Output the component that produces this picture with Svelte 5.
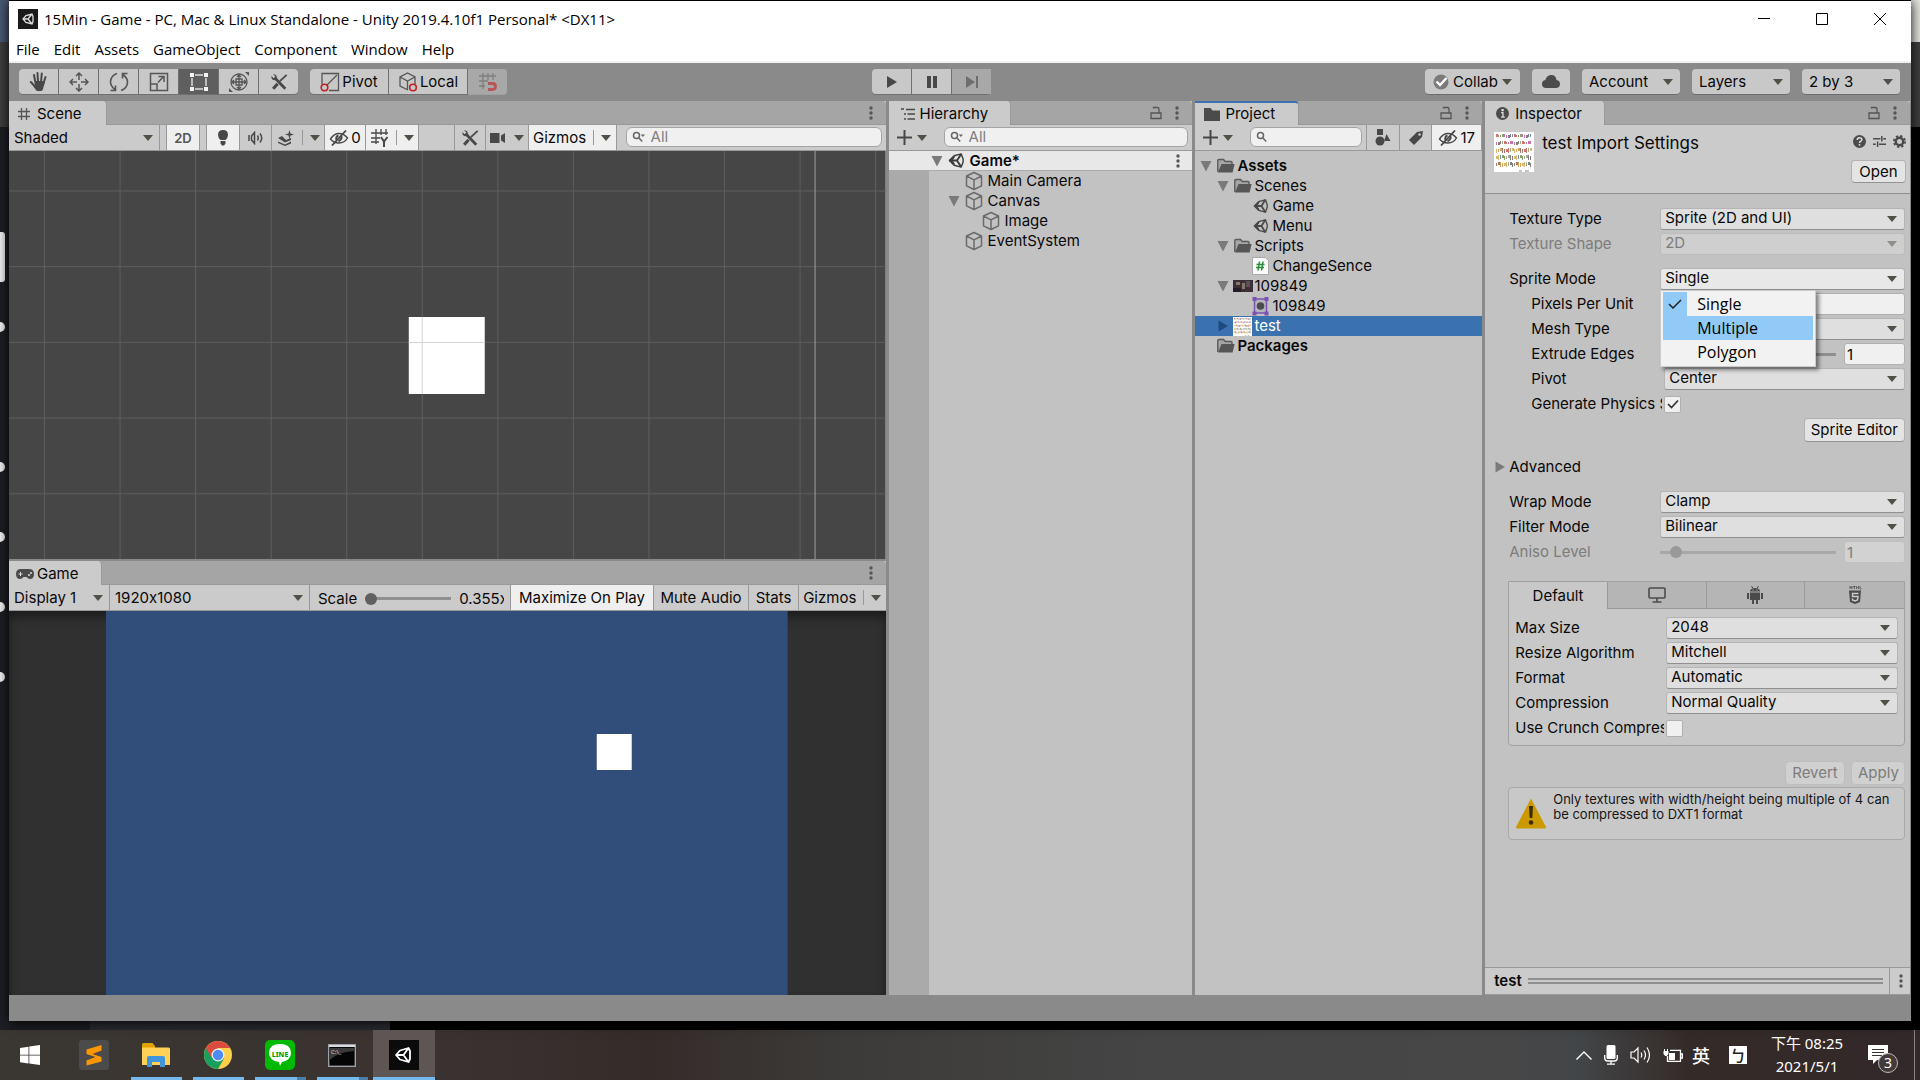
<script>
  const menus = ['File', 'Edit', 'Assets', 'GameObject', 'Component', 'Window', 'Help'];
  const hierarchy = [
    { name: 'Main Camera', depth: 1 },
    { name: 'Canvas', depth: 1, open: true },
    { name: 'Image', depth: 2 },
    { name: 'EventSystem', depth: 1 }
  ];
  const project = [
    { name: 'Assets', depth: 0, icon: 'folder', state: 'open', bold: true },
    { name: 'Scenes', depth: 1, icon: 'folder', state: 'open' },
    { name: 'Game', depth: 2, icon: 'unity' },
    { name: 'Menu', depth: 2, icon: 'unity' },
    { name: 'Scripts', depth: 1, icon: 'folder', state: 'open' },
    { name: 'ChangeSence', depth: 2, icon: 'script' },
    { name: '109849', depth: 1, icon: 'photo', state: 'open' },
    { name: '109849', depth: 2, icon: 'sprite' },
    { name: 'test', depth: 1, icon: 'sheet', state: 'closed', selected: true },
    { name: 'Packages', depth: 0, icon: 'folder', bold: true }
  ];
  const platformFields = [
    ['Max Size', '2048'],
    ['Resize Algorithm', 'Mitchell'],
    ['Format', 'Automatic'],
    ['Compression', 'Normal Quality']
  ];
  const spriteModes = ['Single', 'Multiple', 'Polygon'];
  const inks = ['#7a4a3a', '#c0443a', '#5a8a3a', '#caa23a', '#4a6aa0', '#b04a8a', '#555', '#d0801f', '#8a8a70'];
  const rowInks = [[1, 2, 5, 6, 4], [1, 5, 5, 6, 8], [3, 7, 0, 1, 8], [2, 8, 6, 3, 4], [6, 0, 7, 3, 8]];
  const blobs = [];
  for (let r = 0; r < 5; r++) {
    for (let c = 0; c < 18; c++) {
      const k = (r * 7 + c * 5) % 9;
      blobs.push({
        x: 2 + c * 2,
        y: 2 + r * 7 + (k % 2),
        w: 1 + (k % 3 === 0 ? 1 : 0),
        h: 3 + (k % 3) * (r > 1 ? 1 : 0) - (k % 4 === 1 ? 1 : 0),
        f: inks[rowInks[r][k % 5]]
      });
    }
  }
  const vLines = Array.from({ length: 12 }, (_, i) => 35.5 + i * 75.6);
  const hLines = Array.from({ length: 5 }, (_, i) => 40 + i * 75.7);
</script>

{#snippet arrow()}<svg class="arrow" viewBox="0 0 10 6" width="10" height="6"><path d="M0 0h10L5 6z" fill="currentColor" /></svg>{/snippet}
{#snippet kebab()}<button class="bare" aria-label="Panel options"><svg viewBox="0 0 4 14" width="4" height="14" fill="#555"><circle cx="2" cy="2" r="1.7" /><circle cx="2" cy="7" r="1.7" /><circle cx="2" cy="12" r="1.7" /></svg></button>{/snippet}
{#snippet lock()}<button class="bare" aria-label="Lock panel"><svg viewBox="0 0 12 14" width="12" height="14" fill="none" stroke="#555" stroke-width="1.3"><path d="M1 7h10v5.5H1zM3.500 2.500V1.500H7.500Q9 1.500 9 3V7" /></svg></button>{/snippet}
{#snippet foldout(open)}
  <svg class="fold" viewBox="0 0 12 12" width="12" height="12" fill="currentColor">
    {#if open}<path d="M0.500 1h11L6 11.500z" />{:else}<path d="M1.500 .5v11L11 6z" />{/if}
  </svg>
{/snippet}
{#snippet unity(size, color)}
  <svg viewBox="0 0 18 18" width={size} height={size} fill="none" stroke={color} stroke-linejoin="round">
    <path d="M1.500 9 6.500 4 14 2l2 5.500v3L14 16l-7.500-2z" stroke-width="1.500" />
    <path d="M1.500 9H9.500M14 2 9.500 9 14 16" stroke-width="2" />
    <path d="M1 9 7 3.500V6L4.500 9 7 12v2.500z" fill={color} stroke="none" />
  </svg>
{/snippet}
{#snippet cube()}
  <svg class="cube" viewBox="0 0 18 20" width="18" height="20" fill="none" stroke="#6b6b6b" stroke-width="1.500" stroke-linejoin="round">
    <path d="M9 1.500 16.500 5v9.800L9 18.500l-7.500-3.700V5zM1.500 5 9 8.800 16.500 5M9 8.800v9.700" />
  </svg>
{/snippet}
{#snippet folder()}
  <svg viewBox="0 0 18 16" width="18" height="16">
    <path d="M.8 14V2.500Q.8 1.500 2 1.500h4.500l1.800 2H14q1 0 1 1V6" fill="#a6a6a6" stroke="#5a5a5a" stroke-width="1.400" />
    <path d="M1 14.500 4.500 6H17.600l-2 8.500z" fill="#565656" />
  </svg>
{/snippet}
{#snippet magnifier(drop)}
  <svg viewBox="0 0 14 12" width="14" height="12" fill="none" stroke="#666" stroke-width="1.500">
    <circle cx="4.500" cy="4.500" r="3" /><path d="m6.800 6.800 3.400 3.600" />
    {#if drop}<path d="M8.800 3.500h4.200L10.900 6z" fill="#666" stroke="none" />{/if}
  </svg>
{/snippet}
{#snippet sheet(size)}
  <svg viewBox="0 0 40 40" width={size} height={size}>
    <rect width="40" height="40" fill="#fff" />
    {#each blobs as b}<rect x={b.x} y={b.y} width={b.w} height={b.h} fill={b.f} opacity="0.75" />{/each}
    <path d="M25 39h3M31 39h4" stroke="#888" />
  </svg>
{/snippet}
{#snippet tools()}
  <svg viewBox="0 0 20 20" width="18" height="18" fill="none" stroke="#484848">
    <path d="m5.500 5.500 11.500 12" stroke-width="3" /><path d="M3.500 1.300Q8.300 1.500 7.600 6.500L5.800 8Q1.200 8 1.500 3.200L4 5.700 6 4z" fill="#484848" stroke="none" />
    <path d="M18.500 2 11 9" stroke-width="2" /><path d="m8.500 12-5 5.500" stroke-width="3.500" />
  </svg>
{/snippet}
{#snippet eye()}
  <svg viewBox="0 0 20 16" width="20" height="16" fill="none" stroke="#484848" stroke-width="1.400">
    <path d="M1.500 9Q5 3.500 10 3.500T18.500 8Q15.500 13 10 13T1.500 9z" /><path d="M9.500 5.500q-3 1-2 5M12 5.500q2 3-2.500 6" stroke-width="2" /><path d="M3 15.500 17 .5" stroke-width="1.800" />
  </svg>
{/snippet}
{#snippet gridIcon()}
  <svg viewBox="0 0 14 14" width="14" height="14" fill="none" stroke="#555" stroke-width="1.300"><path d="M4.500 1v12M9.500 1v12M1 4.500h12M1 9.500h12" /></svg>
{/snippet}
{#snippet dropdown(id, value, disabled)}
  <span class="dd" class:off={disabled}>
    <select {id} {disabled}><option>{value}</option></select>
    {@render arrow()}
  </span>
{/snippet}

<div class="desktop">
  <div class="peek" aria-hidden="true">
    <i class="bar"></i><i></i><i class="far"></i><i></i><i></i><i></i>
  </div>
  <div class="app">
    <header class="title">
      <svg viewBox="0 0 20 20" width="20" height="20"><rect width="20" height="20" fill="#1b1b1b" /><path d="m5 10 3-3.500 6-1.500 1 2.500v5L14 15l-6-1.500zM5 10h5l4-5M10 10l4 5" fill="none" stroke="#ddd" stroke-width="1.300" /></svg>
      <h1>15Min - Game - PC, Mac &amp; Linux Standalone - Unity 2019.4.10f1 Personal* &lt;DX11&gt;</h1>
      <div class="winctl">
        <button aria-label="Minimize"><svg viewBox="0 0 12 12" width="12" height="12" stroke="#000"><path d="M0 5.500h12" /></svg></button>
        <button aria-label="Maximize"><svg viewBox="0 0 12 12" width="12" height="12" stroke="#000" fill="none"><path d="M.5.5h11v11H.5z" /></svg></button>
        <button aria-label="Close"><svg viewBox="0 0 12 12" width="12" height="12" stroke="#000"><path d="m0 0 12 12M12 0 0 12" /></svg></button>
      </div>
    </header>
    <nav class="menu">{#each menus as m}<button>{m}</button>{/each}</nav>

    <div class="main-tools">
      <div class="left">
        <div class="group seven">
          <button aria-label="Hand"><svg viewBox="0 0 20 22" width="20" height="22" fill="none" stroke="#484848" stroke-linecap="round"><path d="M6.500 12 5 4M9 11l-.5-9M12 11l.8-8.500M14.500 12.500 16.500 6M6.500 16 1.800 11" stroke-width="2" /><path d="M6 10h9q1 0 .5 2.500L14 18q-.5 2-2 2H9q-1.500 0-2.500-1.500L3 13l3 1z" fill="#484848" stroke="none" /></svg></button>
          <button aria-label="Move"><svg viewBox="0 0 20 20" width="20" height="20" fill="none" stroke="#555" stroke-width="1.500"><path d="M10 1.500V8M10 12v6.500M1.500 10H8M12 10h6.500M7 4l3-3 3 3M7 16l3 3 3-3M4 7l-3 3 3 3M16 7l3 3-3 3" /></svg></button>
          <button aria-label="Rotate"><svg viewBox="0 0 20 20" width="20" height="20" fill="none" stroke="#555" stroke-width="1.600"><path d="M8 1.500Q1.500 4 1.500 10q0 4 4.500 7.500M1.500 18.500h5v-5M12 18.500q6.500-2.500 6.500-8.500 0-4-4.500-7.500M18.500 1.500h-5v5" /></svg></button>
          <button aria-label="Scale"><svg viewBox="0 0 20 20" width="20" height="20" fill="none" stroke="#555" stroke-width="1.500"><path d="M1.500 1.500h17v17h-17zM1.500 12H8v6.500M9 10.500l5.500-6M9.500 4.500h5.500v5.500" /></svg></button>
          <button aria-label="Rect" class="active"><svg viewBox="0 0 20 20" width="20" height="20"><path d="M6 3h8M6 17h8M3 6v8M17 6v8" stroke="#ddd" stroke-width="1.500" /><path d="M1 1h4v4H1zM15 1h4v4h-4zM1 15h4v4H1zM15 15h4v4h-4z" fill="#f4f4f4" /></svg></button>
          <button aria-label="Transform"><svg viewBox="0 0 22 22" width="22" height="22" fill="none" stroke="#555" stroke-width="1.300"><circle cx="11" cy="11" r="8" /><path d="M11 4v14M4 11h14M9 6l2-2 2 2M9 16l2 2 2-2M6 9l-2 2 2 2M16 9l2 2-2 2M8 8h6v6H8z" /><path d="M17 1h4v4zM1 17v4h4z" fill="#555" stroke="none" /></svg></button>
          <button aria-label="Custom tools">{@render tools()}</button>
        </div>
        <div class="group two">
          <button><svg viewBox="0 0 20 20" width="20" height="20" fill="none" stroke="#555" stroke-width="1.300"><path d="M2 12V1.500h16.500v17H9M7 13 17 3" /><circle cx="4.500" cy="15.500" r="3.300" stroke="#c02020" stroke-width="1.600" /></svg>Pivot</button>
          <button><svg viewBox="0 0 20 20" width="20" height="20" fill="none" stroke="#555" stroke-width="1.300"><path d="M10 18 2 14V5l7.500-4L17 5v7M2 5l7.500 4L17 5M9.500 9v9" /><circle cx="15" cy="15.500" r="3.300" stroke="#c02020" stroke-width="1.600" /></svg>Local</button>
          <button disabled aria-label="Snap"><svg viewBox="0 0 20 20" width="20" height="20" fill="none" stroke="#666" stroke-width="1.300"><path d="M5 1v16M10 1v7M15 1v7M1 4h17M1 9h9M1 14h6" /><path d="M10 11.500h4.500q3 0 3 3t-3 3H10" stroke="#c02020" stroke-width="2.800" /></svg></button>
        </div>
      </div>
      <div class="play">
        <button aria-label="Play"><svg viewBox="0 0 10 12" width="10" height="12"><path d="M0 0v12l10-6z" fill="#484848" /></svg></button>
        <button aria-label="Pause"><svg viewBox="0 0 10 12" width="10" height="12"><path d="M0 0h4v12H0zM6 0h4v12H6z" fill="#484848" /></svg></button>
        <button aria-label="Step" disabled><svg viewBox="0 0 12 12" width="12" height="12"><path d="M0 0v12l9-6zM10 0h2v12h-2z" fill="#484848" /></svg></button>
      </div>
      <div class="right">
        <button class="pill w95"><svg viewBox="0 0 16 16" width="16" height="16"><circle cx="8" cy="8" r="7.500" fill="#7b7b7b" /><path d="m3.500 7.500 3.500 3.500 6.500-7" fill="none" stroke="#fff" stroke-width="2.400" /></svg>Collab {@render arrow()}</button>
        <button class="pill w38" aria-label="Services"><svg viewBox="0 0 18 13" width="18" height="13"><path d="M4 13q-4 0-4-4 0-3.500 3.300-4Q5 0 9.500 0q4.300 0 5 5Q18 5.500 18 9t-3.500 4z" fill="#4b4b4b" /></svg></button>
        <span class="pill w99"><select aria-label="Account"><option>Account</option></select>{@render arrow()}</span>
        <span class="pill w99"><select aria-label="Layers"><option>Layers</option></select>{@render arrow()}</span>
        <span class="pill w99"><select aria-label="Layout"><option>2 by 3</option></select>{@render arrow()}</span>
      </div>
    </div>

    <main class="panels">
      <div class="views">
        <section class="panel scene">
          <div class="tabs"><button class="tab scene-tab">{@render gridIcon()}Scene</button><span class="tab-end">{@render kebab()}</span></div>
          <div class="bar-row">
            <span class="mini shade"><select aria-label="Shading"><option>Shaded</option></select>{@render arrow()}</span>
            <span class="gap7"></span>
            <button class="lit w34"><b>2D</b></button>
            <span class="gap7"></span>
            <button class="lit w34" aria-label="Lighting"><svg viewBox="0 0 12 16" width="12" height="16" fill="#484848"><path d="M6 0q5 0 5 5 0 2.500-2.500 5h-5Q1 7.500 1 5q0-5 5-5zM3.500 11h5v2.500L7 15.500H5l-1.500-2z" /></svg></button>
            <button class="w31" aria-label="Audio"><svg viewBox="0 0 16 14" width="16" height="14" fill="none" stroke="#484848" stroke-width="1.500"><path d="M1 4v6M3.500 5l3-3.500v11L3.500 9zM9.500 4.500q1.500 2.500 0 5M12 2.500q3.500 4.500 0 9" /></svg></button>
            <button class="split w54" aria-label="Effects"><svg viewBox="0 0 18 16" width="18" height="16" fill="#484848"><path d="m1 8 4-2 4 4 5-2v2l-6 2.500zM1 11.500l7 3 6-3v2L8 16l-7-3zM12.500 0l1 3.500 3.500 1-3.500 1-1 3.500-1-3.500-3.500-1 3.500-1z" /></svg><i></i>{@render arrow()}</button>
            <button class="lit w42">{@render eye()}0</button>
            <button class="lit split w53" aria-label="Grid"><svg viewBox="0 0 18 18" width="18" height="18" fill="none" stroke="#484848" stroke-width="1.300"><path d="M5 0v15M10 0v6M15 0v6M0 4h17M0 9h9M0 13h8" /><path d="m10 8 3 4.500L16.500 8M13 12.500V18" stroke-width="2" /></svg><i></i>{@render arrow()}</button>
            <span class="fill"></span>
            <button class="edge w31" aria-label="Component tools">{@render tools()}</button>
            <button class="w45" aria-label="Camera"><svg viewBox="0 0 16 12" width="16" height="12" fill="#484848"><path d="M0 1h9.500v10H0zM11 3.500 15 1v10l-4-2.500z" /></svg>{@render arrow()}</button>
            <button class="lit split w88">Gizmos<i></i>{@render arrow()}</button>
            <label class="search wide">{@render magnifier(true)}<input placeholder="All" aria-label="Search scene" /></label>
          </div>
          <svg class="canvas" viewBox="0 0 877 408" preserveAspectRatio="none">
            <rect width="877" height="408" fill="#464646" />
            <g stroke="#5f5f5f">
              {#each vLines as x}<path d="M{x} 0V408" />{/each}
              {#each hLines as y}<path d="M0 {y}H877" />{/each}
            </g>
            <path d="M806.500 0V408" stroke="#a0a0a0" />
            <rect x="400" y="166" width="76" height="77" fill="#fff" />
            <path d="M413.500 166v77M400 191.500h76" stroke="#d4d4d4" />
          </svg>
        </section>
        <section class="panel game">
          <div class="tabs"><button class="tab game-tab"><svg viewBox="0 0 18 10" width="18" height="10"><path d="M5 0h8q5 0 5 5t-4 5q-2 0-3.500-2h-3Q6 10 4 10 0 10 0 5t5-5z" fill="#4b4b4b" /><path d="M2.500 5h4M4.500 3v4" stroke="#ddd" /><circle cx="13" cy="6" r="1" fill="#ddd" /><circle cx="15" cy="4" r="1" fill="#ddd" /></svg>Game</button><span class="tab-end">{@render kebab()}</span></div>
          <div class="bar-row">
            <span class="mini disp"><select aria-label="Display"><option>Display 1</option></select>{@render arrow()}</span>
            <span class="mini res"><select aria-label="Resolution"><option>1920x1080</option></select>{@render arrow()}</span>
            <label class="scale">Scale<input type="range" min="0" max="100" value="0" /><output>0.355x</output></label>
            <button class="lit w143">Maximize On Play</button>
            <button class="w95">Mute Audio</button>
            <button class="w50">Stats</button>
            <button class="split grow">Gizmos<i></i>{@render arrow()}</button>
          </div>
          <div class="stage">
            <svg viewBox="0 0 682 384" preserveAspectRatio="none"><rect width="682" height="384" fill="#314d79" /><rect x="491" y="123" width="35" height="36" fill="#fff" /></svg>
          </div>
        </section>
      </div>

      <section class="panel hierarchy">
        <div class="tabs"><button class="tab hier-tab"><svg viewBox="0 0 14 12" width="14" height="12" stroke="#484848" stroke-width="1.400"><path d="M0 1h3M5 1.500h9M3 6h2M6.500 6H14M3 11h2M6.500 11H14" /></svg>Hierarchy</button><span class="tab-end">{@render lock()}{@render kebab()}</span></div>
        <div class="bar-row find">
          <button class="add" aria-label="Create"><svg viewBox="0 0 15 15" width="15" height="15" stroke="#484848" stroke-width="2"><path d="M7.500 0v15M0 7.500h15" /></svg>{@render arrow()}</button>
          <label class="search">{@render magnifier(true)}<input placeholder="All" aria-label="Search hierarchy" /></label>
        </div>
        <div class="scene-row">{@render foldout(true)}{@render unity(17, '#3c3c3c')}<strong>Game*</strong>{@render kebab()}</div>
        <div class="hier-body">
          <ul>
            {#each hierarchy as h}
              <li class="d{h.depth}"><span class="slot">{#if h.open}{@render foldout(true)}{/if}</span>{@render cube()}{h.name}</li>
            {/each}
          </ul>
        </div>
      </section>

      <section class="panel project">
        <div class="tabs"><button class="tab proj-tab"><svg viewBox="0 0 16 14" width="16" height="14"><path d="M0 14V1h6.500l2 2.500H16V14z" fill="#4b4b4b" /></svg>Project</button><span class="tab-end">{@render lock()}{@render kebab()}</span></div>
        <div class="bar-row find">
          <button class="add" aria-label="Create"><svg viewBox="0 0 15 15" width="15" height="15" stroke="#484848" stroke-width="2"><path d="M7.500 0v15M0 7.500h15" /></svg>{@render arrow()}</button>
          <label class="search">{@render magnifier(false)}<input aria-label="Search project" /></label>
          <button class="edge w33" aria-label="Filter by type"><svg viewBox="0 0 16 17" width="16" height="17" fill="#484848"><path d="M2 0h6v6H2zM11.500 5l4 7H9z" /><circle cx="5" cy="12" r="4.500" /></svg></button>
          <button class="w31" aria-label="Filter by label"><svg viewBox="0 0 14 14" width="14" height="14"><path d="M8 1 14 0l-1 6-8 8-5-5z" fill="#484848" /><circle cx="10.500" cy="3.500" r="1.300" fill="#cbcbcb" /></svg></button>
          <button class="lit w50">{@render eye()}17</button>
        </div>
        <ul class="tree">
          {#each project as p}
            <li class="p{p.depth}" class:selected={p.selected} class:bold={p.bold}>
              <span class="slot">{#if p.state}{@render foldout(p.state === 'open')}{/if}</span>
              <span class="ico">
                {#if p.icon === 'folder'}{@render folder()}
                {:else if p.icon === 'unity'}{@render unity(16, '#484848')}
                {:else if p.icon === 'script'}<svg viewBox="0 0 17 18" width="17" height="18"><path d="M.5.5h13l3 3v14H.5z" fill="#fafafa" stroke="#aaa" /><path d="M7.500 4.500 6 13.500M11 4.500 9.500 13.500M4.500 7.500h8M4 10.500h8" stroke="#2e8b3e" stroke-width="1.500" /></svg>
                {:else if p.icon === 'photo'}<svg viewBox="0 0 20 12" width="20" height="12"><rect width="20" height="12" fill="#3b2f35" /><path d="M3 2h4v3H3zM9 3h3v6H9z" fill="#84786c" /><path d="M13 1h4v6h-4z" fill="#5c5058" /><path d="M0 8h8v4H0z" fill="#241c28" /></svg>
                {:else if p.icon === 'sprite'}<svg viewBox="0 0 17 20" width="17" height="20"><path d="M2.500 3v14h12V3z" fill="#b5b5bd" stroke="#7a52b3" stroke-width="1.500" /><path d="M.5 1h4v4h-4zM12.500 1h4v4h-4zM.5 15.500h4v4h-4zM12.500 15.500h4v4h-4z" fill="#7a52b3" /><circle cx="8.500" cy="10" r="3.800" fill="#4b4b4b" /></svg>
                {:else}{@render sheet(19)}{/if}
              </span>{p.name}
            </li>
          {/each}
        </ul>
      </section>

      <section class="panel inspector">
        <div class="tabs"><button class="tab insp-tab"><svg viewBox="0 0 14 14" width="13" height="13"><circle cx="7" cy="7" r="7" fill="#4b4b4b" /><path d="M5.500 6H7.500v4.500M5.500 11h4M6.500 2.800h1.200v1.200H6.500z" stroke="#ddd" fill="none" stroke-width="1.400" /></svg>Inspector</button><span class="tab-end">{@render lock()}{@render kebab()}</span></div>
        <div class="head">
          {@render sheet(40)}
          <h2>test Import Settings</h2>
          <div class="head-side">
            <div class="head-icons">
              <svg viewBox="0 0 14 14" width="13" height="13"><circle cx="7" cy="7" r="7" fill="#4b4b4b" /><path d="M4.500 5.500q0-2.500 2.500-2.500t2.500 2q0 1-1.500 2-1 .5-1 1.500M7 9.700v1.800" fill="none" stroke="#ddd" stroke-width="1.600" /></svg>
              <svg viewBox="0 0 14 14" width="13" height="13" fill="none" stroke="#4b4b4b" stroke-width="1.600"><path d="M0 4h8M11 4h3M9.500 1v6M0 10h3M6.500 10H14M5 7v6" /></svg>
              <svg viewBox="0 0 14 14" width="13" height="13" fill="none" stroke="#4b4b4b"><circle cx="7" cy="7" r="4" stroke-width="2.600" /><circle cx="7" cy="7" r="6" stroke-width="2" stroke-dasharray="2.500 2.210" /></svg>
            </div>
            <button class="btn open-btn">Open</button>
          </div>
        </div>
        <div class="body">
          <div class="fields">
            <div class="row"><label for="tt">Texture Type</label>{@render dropdown('tt', 'Sprite (2D and UI)', false)}</div>
            <div class="row dim"><label for="ts">Texture Shape</label>{@render dropdown('ts', '2D', true)}</div>
            <div class="row space">
              <label for="sm">Sprite Mode</label>
              <span class="dd hot">
                <select id="sm">{#each spriteModes as m}<option>{m}</option>{/each}</select>{@render arrow()}
                <div class="popup" role="listbox" aria-label="Sprite Mode">
                  {#each spriteModes as m, i}
                    <button role="option" aria-selected={i === 0} class:hover={i === 1}>
                      <span class="tick">{#if i === 0}<svg viewBox="0 0 14 10" width="14" height="10"><path d="m1 5 4 4 8-8" fill="none" stroke="#222" stroke-width="1.500" /></svg>{/if}</span>{m}
                    </button>
                  {/each}
                </div>
              </span>
            </div>
            <div class="row sub"><label for="ppu">Pixels Per Unit</label><input id="ppu" class="box" /></div>
            <div class="row sub"><label for="mt">Mesh Type</label>{@render dropdown('mt', 'Tight', false)}</div>
            <div class="row sub"><label for="ee">Extrude Edges</label><span class="slide"><input id="ee" type="range" min="0" max="32" value="1" /><input class="box num" value="1" aria-label="Extrude Edges value" /></span></div>
            <div class="row sub"><label for="pv">Pivot</label>{@render dropdown('pv', 'Center', false)}</div>
            <div class="row sub"><label for="gp">Generate Physics Shape</label><span class="check"><input id="gp" type="checkbox" checked /><svg viewBox="0 0 12 10" width="12" height="10"><path d="m1 5 3.500 3.500L11 1.500" fill="none" stroke="#333" stroke-width="1.700" /></svg></span></div>
          </div>
          <div class="actions sprite-ed"><button class="btn">Sprite Editor</button></div>
          <button class="advanced">{@render foldout(false)}Advanced</button>
          <div class="fields">
            <div class="row"><label for="wm">Wrap Mode</label>{@render dropdown('wm', 'Clamp', false)}</div>
            <div class="row"><label for="fm">Filter Mode</label>{@render dropdown('fm', 'Bilinear', false)}</div>
            <div class="row dim"><label for="al">Aniso Level</label><span class="slide"><input id="al" type="range" min="0" max="16" value="1" disabled /><input class="box num" value="1" aria-label="Aniso Level value" disabled /></span></div>
          </div>
          <div class="platform">
            <div class="ptabs">
              <button class="on">Default</button>
              <button aria-label="Standalone"><svg viewBox="0 0 18 16" width="18" height="16" fill="none" stroke="#4b4b4b" stroke-width="1.600"><rect x="1" y="1" width="16" height="10" rx="1" /><path d="M9 11v3.500M4.500 15h9" /></svg></button>
              <button aria-label="Android"><svg viewBox="0 0 16 18" width="16" height="18" fill="#4b4b4b"><path d="M3 5.500q0-3.500 5-3.500t5 3.500zM3 6.500h10V14H3zM0 7h2v6H0zM14 7h2v6h-2zM5 14h2v4H5zM9 14h2v4H9z" /><path d="m4.500 0 1.500 2.500M11.500 0 10 2.500" stroke="#4b4b4b" /><path d="M5.500 3.500h1v1h-1zM9.500 3.500h1v1h-1z" fill="#bbb" /></svg></button>
              <button aria-label="WebGL"><svg viewBox="0 0 14 18" width="14" height="18"><path d="M1 4.500h12l-1 11.500-5 2-5-2z" fill="#4b4b4b" /><path d="M10.500 7.500h-6v3h5.500l-.5 3.500-2.500 1-2.500-1v-1.500" fill="none" stroke="#ccc" stroke-width="1.400" /><path d="M2 0v3M4 0v3M2 1.500h2M5 .5h2.500M6.300 0v3M8.500 3V.5l1 1 1-1V3M12 0v3h1.500" stroke="#4b4b4b" stroke-width=".8" fill="none" /></svg></button>
            </div>
            <div class="fields">
              {#each platformFields as [label, value], i}
                <div class="row"><label for="pf{i}">{label}</label>{@render dropdown('pf' + i, value, false)}</div>
              {/each}
              <div class="row"><label for="cc">Use Crunch Compression</label><span class="check"><input id="cc" type="checkbox" /></span></div>
            </div>
          </div>
          <div class="actions apply"><button class="btn" disabled>Revert</button><button class="btn" disabled>Apply</button></div>
          <div class="help">
            <svg viewBox="0 0 32 32" width="32" height="32"><path d="M16 1.500 31 30q.5 1.500-1.500 1.500h-27Q.5 31.500 1 30z" fill="#cc9a00" /><path d="M14 9h4l-.7 12h-2.600z" fill="#3a2c00" /><circle cx="16" cy="25.500" r="2.300" fill="#3a2c00" /></svg>
            <p>Only textures with width/height being multiple of 4 can be compressed to DXT1 format</p>
          </div>
        </div>
        <footer class="preview"><strong>test</strong><span class="grip"></span>{@render kebab()}</footer>
      </section>
    </main>
  </div>

  <footer class="taskbar">
    <button aria-label="Start"><svg viewBox="0 0 20 20" width="20" height="20" fill="#fff"><path d="M0 3l8.500-1.300v8H0zM9.300 1.600 20 0v9.700H9.300zM0 10.500h8.500v8L0 17.300zM9.300 10.500H20V20L9.300 18.500z" /></svg></button>
    <button aria-label="Sublime Text"><svg viewBox="0 0 30 30" width="30" height="30"><rect width="30" height="30" rx="3" fill="#4b4b4b" /><path d="M22.500 5v5.500L13.500 14l9 3v4.500L7.500 25.500v-5l9-3.500-9-3V9.500z" fill="#ff9800" /></svg></button>
    <button class="run" aria-label="File Explorer"><svg viewBox="0 0 28 24" width="28" height="24"><path d="M0 1.500Q0 0 1.500 0h9L13 3v3H0z" fill="#e2a300" /><path d="M0 4.500h26.500q1.500 0 1.500 1.500v16H0z" fill="#ffd257" /><path d="M5 24V15q0-2 2-2h14q2 0 2 2v9h-5v-5h-8v5z" fill="#3f96dd" /></svg></button>
    <button class="run" aria-label="Chrome"><svg viewBox="0 0 28 28" width="28" height="28"><circle cx="14" cy="14" r="14" fill="#fdd04a" /><path d="M1.900 7A14 14 0 0 0 14 28l6-10.500L14 14z" fill="#17a05d" /><path d="M1.900 7A14 14 0 0 1 26.100 7H14L8 17.500z" fill="#db4b3f" /><circle cx="14" cy="14" r="6.500" fill="#f1f1f1" /><circle cx="14" cy="14" r="5.200" fill="#4c8bf5" /></svg></button>
    <button class="run multi" aria-label="LINE"><svg viewBox="0 0 30 30" width="30" height="30"><rect width="30" height="30" rx="5" fill="#00b900" /><path d="M15 4q11 0 11 9 0 7-9 9l-2 4-1-4Q4 20.500 4 13q0-9 11-9z" fill="#fff" /><text x="15" y="16.500" text-anchor="middle" font-size="7" font-weight="800" fill="#00a000">LINE</text></svg></button>
    <button class="run multi" aria-label="Command Prompt"><svg viewBox="0 0 28 23" width="28" height="23"><rect x=".7" y=".7" width="26.600" height="21.600" fill="#050505" stroke="#9aa0a6" stroke-width="1.400" /><path d="M1 1h26v2H1z" fill="#d9dcdf" /><path d="M1.500 4H26v3Q10 8 1.500 16z" fill="#3a3a3a" /><text x="3" y="9.500" font-size="6" fill="#ddd">C:\_</text></svg></button>
    <button class="run current" aria-label="Unity"><svg viewBox="0 0 30 30" width="30" height="30"><rect width="30" height="30" fill="#0b0b0b" /><path d="m7 15 4-4.500L19.500 8l1.500 3v8l-1.500 3L11 19.500zM7 15h7.500l5-7M14.500 15l5 7" fill="none" stroke="#fff" stroke-width="1.800" stroke-linejoin="round" /></svg></button>
    <div class="tray">
      <svg viewBox="0 0 16 9" width="16" height="9"><path d="m.5 8.500 7.500-7.500 7.500 7.500" fill="none" stroke="#fff" stroke-width="1.400" /></svg>
      <svg viewBox="0 0 14 20" width="14" height="20"><rect x="2.500" y="0" width="9" height="14" rx="1.500" fill="#fff" /><path d="M.7 10v3q0 3 3 3h6.600q3 0 3-3v-3M7 16v3M3 19.200h8" fill="none" stroke="#fff" stroke-width="1.300" /></svg>
      <svg viewBox="0 0 21 18" width="21" height="18" fill="none" stroke="#fff" stroke-width="1.200"><path d="M1 6h3l4-4v14l-4-4H1zM11 6.500q1.500 2.500 0 5M14 4.500q3 4.500 0 9M17 1.500q5 7.500 0 15" /></svg>
      <svg viewBox="0 0 20 13" width="20" height="13"><path d="M4.500 7v5.400h13V1.400H7M17.500 5h1.800v4h-1.800" fill="none" stroke="#fff" stroke-width="1.300" /><path d="M6 4h6v7H6zM.5 2h5v3L3.800 7H2.200L.5 5zM1 0h1v2H1zM4 0h1v2H4z" fill="#fff" /></svg>
      <span class="ime">英</span>
      <span class="zhu">ㄅ</span>
      <time><span>下午 08:25</span><span>2021/5/1</span></time>
      <span class="note"><svg viewBox="0 0 20 19" width="20" height="19"><path d="M0 0h20v15H9l-4 4v-4H0z" fill="#fff" /><path d="M4 4.500h12M4 7.500h12M4 10.500h12" stroke="#3a3030" stroke-width="1.200" /></svg><em>3</em></span>
    </div>
  </footer>
</div>

<style>
  :global(body) { background: #000; }
  :global(*) { box-sizing: border-box; }
  .desktop {
    min-height: 100vh; display: flex; flex-direction: column; position: relative;
    font: 15px/20px Inter, "Liberation Sans", sans-serif; font-feature-settings: "calt" 0; color: #090909;
    background:
      linear-gradient(#4a5a75 0 42px, #404040 42px 127px, #1d1f24 127px) left / 9px 100% no-repeat,
      linear-gradient(90deg, #1b1c20 90px, #27292e 90px 390px, #000 390px) bottom / 100% 60px no-repeat,
      linear-gradient(#e6e6e2 0 42px, #404040 42px 127px, #000 127px) right / 9px 100% no-repeat, #000;
  }
  button, select, input { font: inherit; font-feature-settings: inherit; color: inherit; border: 0; padding: 0; margin: 0; background: none; border-radius: 0; }
  svg { display: block; flex: none; }
  select { appearance: none; outline: 0; }
  option { color: #000; }
  ul { list-style: none; margin: 0; padding: 0; }
  h1, h2, p { margin: 0; font-size: inherit; font-weight: 400; }
  .arrow { color: #505048; }

  .peek { position: absolute; left: 0; top: 232px; width: 5px; display: flex; flex-direction: column; gap: 60px; }
  .peek i { width: 5px; height: 10px; background: #f4f4f4; border-radius: 0 5px 5px 0; }
  .peek .bar { height: 50px; border-radius: 0 3px 3px 0; margin-bottom: -20px; }
  .peek .far { margin-top: 70px; }

  .app { flex: 1; margin: 1px 9px 9px; display: flex; flex-direction: column; background: #8a8a8a; position: relative; box-shadow: 0 0 12px #000; min-height: 0; }
  .title { background: #fff; height: 35px; display: flex; align-items: center; padding: 0 2px 0 9px; gap: 6px; font: 15px/20px "Open Sans", "Noto Sans", sans-serif; color: #000; }
  .title h1 { flex: 1; }
  .winctl { display: flex; }
  .winctl button { width: 58px; height: 35px; display: grid; place-items: center; }
  .menu { background: #fff; height: 27px; display: flex; align-items: start; gap: 14px; padding: 3px 7px 0; border-bottom: 2px solid #f0f0f0; font: 15px/20px "Open Sans", "Noto Sans", sans-serif; color: #000; }

  .main-tools { display: grid; grid-template-columns: minmax(0, 863fr) 119px minmax(0, 920fr); align-items: center; height: 38px; }
  .left { display: flex; gap: 12px; padding-left: 10px; }
  .group, .play { display: flex; gap: 1px; background: #707070; border-radius: 4px; height: 26px; }
  .group button, .play button { background: #c8c8c8; height: 25px; display: flex; align-items: center; justify-content: center; gap: 2px; width: 39px; }
  .group.two button { width: 78px; }
  .group.two button:last-child { width: 39px; }
  .group button:first-child, .play button:first-child { border-radius: 4px 0 0 4px; }
  .group button:last-child { border-radius: 0 4px 4px 0; }
  .group .active { background: #5f5f5f; }
  .group button:disabled, .play button:disabled { background: #a8a8a8; }
  button:disabled svg { opacity: 0.6; }
  .group.two { background: linear-gradient(90deg, #707070 158px, #a0a0a0 158px); }
  .play button { width: 39px; }
  .right { display: flex; justify-content: flex-end; gap: 12px; padding-right: 11px; }
  .pill { height: 26px; background: #c8c8c8; border-radius: 4px; border-bottom: 1px solid #6c6c6c; display: flex; align-items: center; justify-content: center; gap: 4px; }
  span.pill { display: grid; align-items: center; justify-content: stretch; }
  span.pill > :global(*) { grid-area: 1 / 1; }
  span.pill select { padding-left: 7px; width: 100%; }
  span.pill .arrow { justify-self: end; margin-right: 7px; pointer-events: none; }
  .w31 { width: 32px; } .w33 { width: 34px; } .w34 { width: 33px; } .w38 { width: 38px; }
  .w42 { width: 41px; } .w45 { width: 43px; } .w50 { width: 50px; } .w53 { width: 53px; } .w54 { width: 53px; }
  .w88 { width: 88px; } .w95 { width: 95px; } .w99 { width: 98px; } .w143 { width: 143px; }

  .panels { flex: 1; display: grid; grid-template-columns: minmax(0, 877fr) minmax(0, 304fr) minmax(0, 287fr) minmax(0, 425fr); gap: 3px; margin: 0 1px 26px 0; }
  .views { display: grid; grid-template-rows: minmax(0, 458fr) minmax(0, 434fr); gap: 2px; }
  .panel { display: flex; flex-direction: column; background: #c2c2c2; min-width: 0; }
  .tabs { height: 24px; background: #a5a5a5; border-bottom: 1px solid #999; display: flex; flex: none; justify-content: space-between; border-radius: 0 4px 0 0; }
  .tab { height: 24px; background: #cbcbcb; border-right: 1px solid #999; border-radius: 0 4px 0 0; display: flex; align-items: center; gap: 6px; padding: 1px 0 0 8px; }
  .scene-tab { width: 98px; } .game-tab { width: 93px; gap: 3px; padding-left: 7px; } .hier-tab { width: 122px; gap: 5px; padding-left: 12px; }
  .proj-tab { width: 104px; gap: 5px; padding: 0 0 0 9px; border-top: 2px solid #3a72b0; } .insp-tab { width: 120px; padding-left: 11px; }
  .tab-end { display: flex; align-items: center; gap: 13px; padding-right: 13px; }
  .bare { display: grid; place-items: center; }
  .bar-row { height: 26px; flex: none; background: #cbcbcb; border-bottom: 1px solid #999; display: flex; align-items: stretch; white-space: nowrap; }
  .bar-row > button { border-right: 1px solid #999; display: flex; align-items: center; justify-content: center; gap: 2px; flex: none; }
  .bar-row .lit { background: #efefef; }
  .bar-row .edge { border-left: 1px solid #999; }
  .bar-row b { font-weight: 600; font-size: 13px; color: #555; }
  .bar-row .split { gap: 7px; }
  .split i { width: 1px; height: 15px; background: #999; }
  .bar-row .w45 { gap: 8px; }
  .bar-row .grow { flex: 1; border-right: 0; }
  .mini { display: grid; align-items: center; border-right: 1px solid #999; flex: none; }
  .mini > :global(*) { grid-area: 1 / 1; }
  .mini select { padding-left: 5px; width: 100%; }
  .mini .arrow { justify-self: end; margin-right: 6px; pointer-events: none; }
  .shade { width: 151px; } .disp { width: 101px; } .res { width: 200px; }
  .gap7 { width: 7px; border-right: 1px solid #999; flex: none; }
  .fill { flex: 1; }
  .search { flex: 1; display: flex; align-items: center; gap: 5px; background: #f0f0f0; border: 1px solid #a4a4a4; border-radius: 6px; height: 20px; margin: 2px 4px 0 9px; padding-left: 5px; min-width: 0; }
  .search.wide { flex: none; width: 256px; }
  .search input { min-width: 0; width: 100%; outline: 0; height: 18px; }
  .search input::placeholder { color: #808080; opacity: 1; }
  .bar-row > .add { width: 46px; border: 0; gap: 5px; }
  .scale { display: flex; align-items: center; gap: 8px; padding: 2px 5px 0 8px; border-right: 1px solid #999; flex: none; width: 201px; overflow: hidden; }
  .scale output { width: 45px; overflow: hidden; }
  .scale input { width: 86px; flex: none; }

  input[type='range'] { appearance: none; height: 14px; background: linear-gradient(#8f8f8f, #8f8f8f) center / 100% 3px no-repeat; outline: 0; }
  input[type='range']::-webkit-slider-thumb { appearance: none; width: 12px; height: 12px; border-radius: 50%; background: #606060; }
  input[type='range']:disabled { background-image: linear-gradient(#a8a8a8, #a8a8a8); }
  input[type='range']:disabled::-webkit-slider-thumb { background: #999; }

  .canvas { width: 100%; flex: 1; min-height: 0; height: 0; }
  .stage { flex: 1; min-height: 0; background: #303030; box-shadow: inset 0 6px 10px #1c1c1c; display: grid; grid-template-columns: 97fr 682fr 98fr; }
  .stage svg { grid-column: 2; width: 100%; height: 100%; }

  .scene-row { height: 20px; background: #e8e8e8; border-bottom: 1px solid #aaa; display: flex; align-items: center; padding: 0 12px 0 42px; gap: 5px; }
  .scene-row strong { flex: 1; }
  strong { font-weight: 600; }
  .fold { color: #7a7a7a; }
  .hier-body { flex: 1; background: #c2c2c2; border-left: 40px solid #aaa; }
  li { display: flex; align-items: center; height: 20px; white-space: nowrap; gap: 3px; }
  .slot { width: 14px; flex: none; }
  .cube { margin-right: 2px; }
  .d1 { padding-left: 19px; } .d2 { padding-left: 36px; }
  .tree { padding-top: 5px; }
  .tree li { gap: 1px; }
  .p0 { padding-left: 5px; } .p1 { padding-left: 22px; } .p2 { padding-left: 40px; }
  .ico { width: 21px; display: grid; place-items: center; flex: none; }
  .tree .bold { font-weight: 600; }
  .selected { background: #3a72b0; color: #fff; }
  .selected .fold { color: #1f4a80; }

  .head { height: 69px; flex: none; background: #cbcbcb; border-bottom: 1px solid #8f8f8f; display: flex; padding: 7px 4px 0 9px; }
  .head h2 { flex: 1; margin: 1px 0 0 8px; font-size: 17px; }
  .head-side { display: flex; flex-direction: column; align-items: flex-end; gap: 12px; padding-top: 3px; }
  .head-icons { display: flex; gap: 7px; }
  .btn { background: #e4e4e4; border: 1px solid #b2b2b2; border-bottom-color: #939393; border-radius: 4px; height: 24px; padding: 0 6px; }
  .open-btn { width: 55px; height: 23px; }
  .btn:disabled { background: #d0d0d0; border-color: #bdbdbd; color: #7c7c7c; }
  .body { flex: 1; padding: 14px 5px 0 23px; min-width: 0; }
  .fields { display: grid; gap: 3px; }
  .row { display: grid; grid-template-columns: 151px minmax(0, 1fr); align-items: center; height: 22px; padding-left: 1px; min-width: 0; }
  .row label { white-space: nowrap; overflow: hidden; margin-right: 2px; }
  .dim { color: #7c7c7c; }
  .space { margin-top: 10px; }
  .sub { padding-left: 23px; grid-template-columns: 133px minmax(0, 1fr); }
  .dd { display: grid; align-items: center; position: relative; background: #dfdfdf; border: 1px solid #b5b5b5; border-bottom-color: #8f8f8f; border-radius: 3px; height: 22px; }
  .dd > select, .dd > .arrow { grid-area: 1 / 1; }
  .dd select { width: 100%; padding-left: 4px; height: 20px; line-height: 18px; padding-bottom: 2px; opacity: 1; }
  .dd > .arrow { justify-self: end; margin-right: 7px; pointer-events: none; }
  .dd.off { background: #cfcfcf; border-color: #bcbcbc; }
  .dd.off .arrow { opacity: 0.5; }
  .dd.hot { background: #e8e8e8; }
  .box { background: #f0f0f0; border: 1px solid #b0b0b0; border-radius: 3px; height: 22px; width: 100%; padding-left: 2px; }
  .box:disabled { background: #d2d2d2; border-color: #c0c0c0; }
  .slide { display: grid; grid-template-columns: minmax(0, 1fr) 61px; gap: 8px; align-items: center; }
  .sub .slide { margin-left: -4px; }
  .check { display: grid; width: 17px; height: 17px; place-items: center; }
  .check > :global(*) { grid-area: 1 / 1; }
  .check input { appearance: none; width: 17px; height: 17px; background: #f0f0f0; border: 1px solid #b0b0b0; border-radius: 2px; }
  .check svg { pointer-events: none; }
  .popup { position: absolute; left: -1px; top: 21px; width: 156px; background: #f2f2f2; border: 1px solid #ccc; padding: 1px 2px 2px; box-shadow: 3px 3px 4px #0007; z-index: 5; font: 16px/22px "Open Sans", "Noto Sans", sans-serif; color: #000; }
  .popup button { display: flex; width: 100%; height: 24px; align-items: center; gap: 10px; }
  .popup .hover, .tick:has(svg) { background: #91c9f7; }
  .tick { width: 24px; height: 24px; display: grid; place-items: center; }
  .actions { display: flex; justify-content: flex-end; gap: 6px; }
  .sprite-ed { margin-top: 3px; }
  .advanced { display: flex; align-items: center; gap: 3px; margin: 15px 0 14px -16px; }
  .advanced .fold { margin-left: 2px; }
  .platform { margin-top: 18px; background: #c8c8c8; border: 1px solid #a0a0a0; border-radius: 0 0 4px 4px; padding-bottom: 6px; }
  .ptabs { display: grid; grid-template-columns: repeat(4, minmax(0, 1fr)); height: 27px; margin-bottom: 8px; }
  .ptabs button { background: #b5b5b5; border-right: 1px solid #999; border-bottom: 1px solid #999; display: grid; place-items: center; }
  .ptabs .on { background: #c8c8c8; border-bottom: 0; }
  .ptabs button:last-child { border-right: 0; }
  .platform .row { padding: 0 6px; grid-template-columns: 151px minmax(0, 1fr); }
  .apply { margin-top: 15px; }
  .apply .btn:first-child { width: 60px; }
  .apply .btn { width: 54px; }
  .help { margin: 2px 0 0; height: 53px; background: #c8c8c8; border: 1px solid #a8a8a8; border-radius: 4px; display: flex; gap: 6px; padding: 0 4px 2px 6px; align-items: center; }
  .help p { font-size: 13px; line-height: 15px; align-self: start; padding-top: 4px; color: #161616; }
  .preview { height: 28px; background: #cbcbcb; border-top: 1px solid #999; border-bottom: 1px solid #999; display: flex; align-items: center; padding: 0 7px 0 9px; gap: 6px; }
  .grip { flex: 1; height: 6px; border-top: 2px solid #8f8f8f; border-bottom: 2px solid #8f8f8f; }
  .preview .bare { border-left: 1px solid #999; height: 26px; padding-left: 9px; }

  .taskbar { height: 50px; display: flex; background: linear-gradient(90deg, #3a3732, #3a3230 24%, #352c2a 34%, #3c3b39 44%, #454545 60%, #474747 78%, #434648 82%, #342b28 88%, #33282a 100%); font-family: "Noto Sans", "Noto Sans CJK TC", sans-serif; color: #fff; }
  .taskbar > button { width: 62px; display: grid; place-items: center; position: relative; }
  .taskbar > button:first-child { width: 63px; padding-right: 3px; }
  .run { background: linear-gradient(#76b9ed, #76b9ed) center bottom / 51px 3px no-repeat; }
  .multi { background: linear-gradient(90deg, #76b9ed 42px, #4b7da5 42px) center bottom / 51px 3px no-repeat; }
  .current { background: linear-gradient(#76b9ed, #76b9ed) center bottom / 100% 3px no-repeat, #5e5654; }
  .tray { margin-left: auto; display: flex; align-items: center; gap: 19px; padding-right: 16px; border-right: 1px solid #8a8280; margin-right: 5px; }
  .tray > svg { margin-right: -7px; }
  .ime { font: 500 18px/24px "Noto Sans CJK TC", sans-serif; margin-left: -3px; }
  .zhu { width: 18px; height: 18px; background: #fff; color: #222; font: 500 16px/18px "Noto Sans CJK TC", sans-serif; text-align: center; }
  time { display: grid; text-align: center; font-size: 15px; line-height: 23px; width: 82px; margin-right: 1px; }
  .note { position: relative; width: 30px; height: 30px; padding-top: 5px; }
  .note em { position: absolute; left: 10px; top: 13px; width: 20px; height: 20px; border-radius: 50%; border: 1px solid #bbb; background: #443a3a; font: 14px/18px "Noto Sans", sans-serif; text-align: center; }
</style>
